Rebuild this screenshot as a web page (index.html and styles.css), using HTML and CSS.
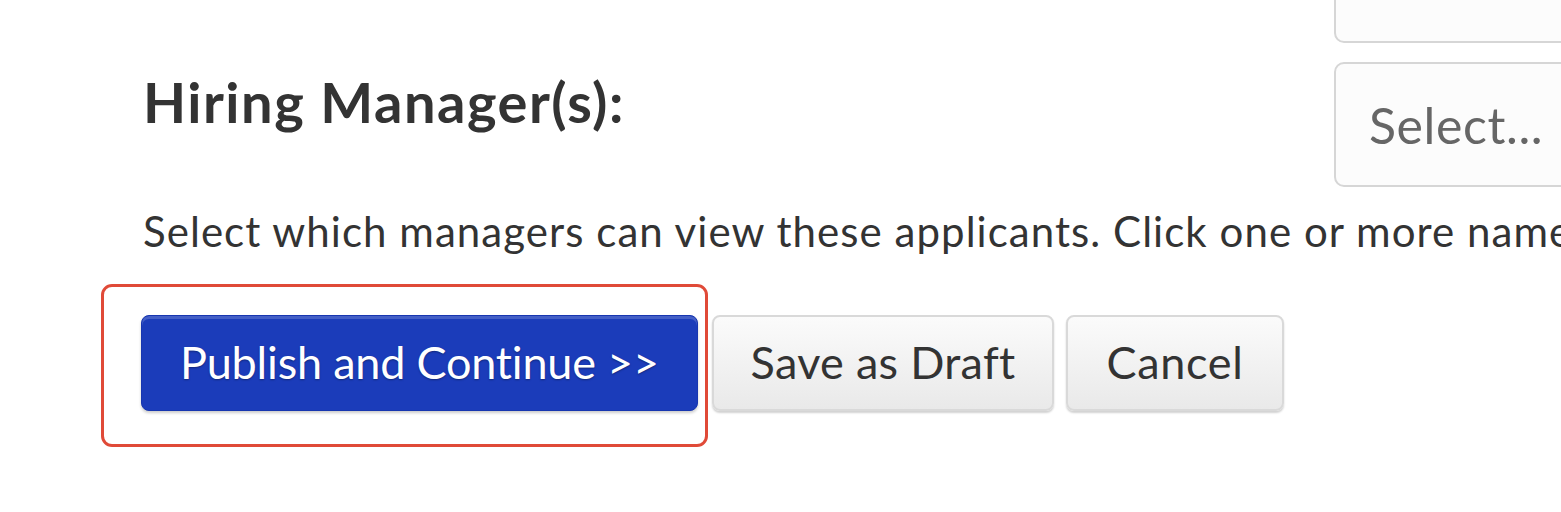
FILE: index.html
```html
<!DOCTYPE html>
<html lang="en">
<head>
<meta charset="utf-8">
<title>Hiring Manager(s)</title>
<link rel="stylesheet" href="styles.css">
</head>
<body>
<div class="page">
  <div class="row">
    <div class="label"></div>
    <div class="field"><div class="select">Select...</div></div>
  </div>
  <div class="row">
    <div class="label">Hiring Manager(s):</div>
    <div class="field"><div class="select">Select...</div></div>
  </div>
  <p class="help">Select which managers can view these applicants. Click one or more names to select them.</p>
  <div class="actions">
    <div class="highlight">
      <button class="btn btn-primary" type="button">Publish and Continue &gt;&gt;</button>
    </div>
    <button class="btn btn-default btn-draft" type="button">Save as Draft</button>
    <button class="btn btn-default btn-cancel" type="button">Cancel</button>
  </div>
</div>
</body>
</html>
```
FILE: styles.css
```css
html, body {
  margin: 0;
  padding: 0;
  background: #ffffff;
  overflow: hidden;
}
body {
  width: 1561px;
  height: 512px;
  font-family: Lato, "Liberation Sans", sans-serif;
  color: #333333;
}
.page {
  padding-left: 141px;
  margin-top: -82px;
}
.row {
  display: flex;
  align-items: flex-start;
  margin-bottom: 19px;
}
.row:last-of-type {
  margin-bottom: 0;
}
.label {
  width: 1193px;
  flex: none;
  font-size: 56px;
  font-weight: 700;
  letter-spacing: 1.5px;
  line-height: 1.2;
  padding-top: 6px;
  padding-left: 2px;
  box-sizing: border-box;
  white-space: nowrap;
}
.field {
  flex: none;
  width: 400px;
}
.select {
  height: 125px;
  box-sizing: border-box;
  border: 2px solid #d6d6d6;
  border-radius: 10px;
  background: #fcfcfc;
  color: #666666;
  font-size: 50px;
  letter-spacing: 0.6px;
  padding-left: 33px;
  display: flex;
  align-items: center;
  white-space: nowrap;
  overflow: hidden;
}
.help {
  margin: 16px 0 0 2px;
  font-size: 42px;
  letter-spacing: 1.05px;
  line-height: 1.2;
  white-space: nowrap;
}
.actions {
  display: flex;
  align-items: flex-start;
  gap: 12px;
  margin-top: 59px;
}
.highlight {
  position: relative;
  display: flex;
  margin-right: 2px;
}
.highlight::after {
  content: "";
  position: absolute;
  top: -31px;
  left: -40px;
  right: -10px;
  bottom: -36px;
  border: 3px solid #e04a38;
  border-radius: 11px;
  pointer-events: none;
}
.btn {
  font-family: inherit;
  font-size: 45px;
  letter-spacing: 0.3px;
  height: 96px;
  box-sizing: border-box;
  border-radius: 8px;
  padding: 0 0 3px;
  margin: 0;
  display: flex;
  align-items: center;
  justify-content: center;
  white-space: nowrap;
  cursor: pointer;
}
.btn-primary {
  color: #ffffff;
  background: #1b3cba;
  border: 1px solid #1736b0;
  box-shadow: inset 0 3px 0 rgba(255, 255, 255, 0.18), 0 2px 3px rgba(0, 0, 0, 0.2);
  text-shadow: 0 1px 2px rgba(0, 0, 0, 0.35);
  letter-spacing: -0.2px;
  width: 557px;
}
.btn-default {
  color: #333333;
  background: linear-gradient(#fbfbfb, #e9e9e9);
  border: 2px solid #d9d9d9;
  box-shadow: 0 2px 2px rgba(0, 0, 0, 0.18);
}
.btn-draft {
  width: 342px;
}
.btn-cancel {
  width: 218px;
  letter-spacing: 0.7px;
}
```
